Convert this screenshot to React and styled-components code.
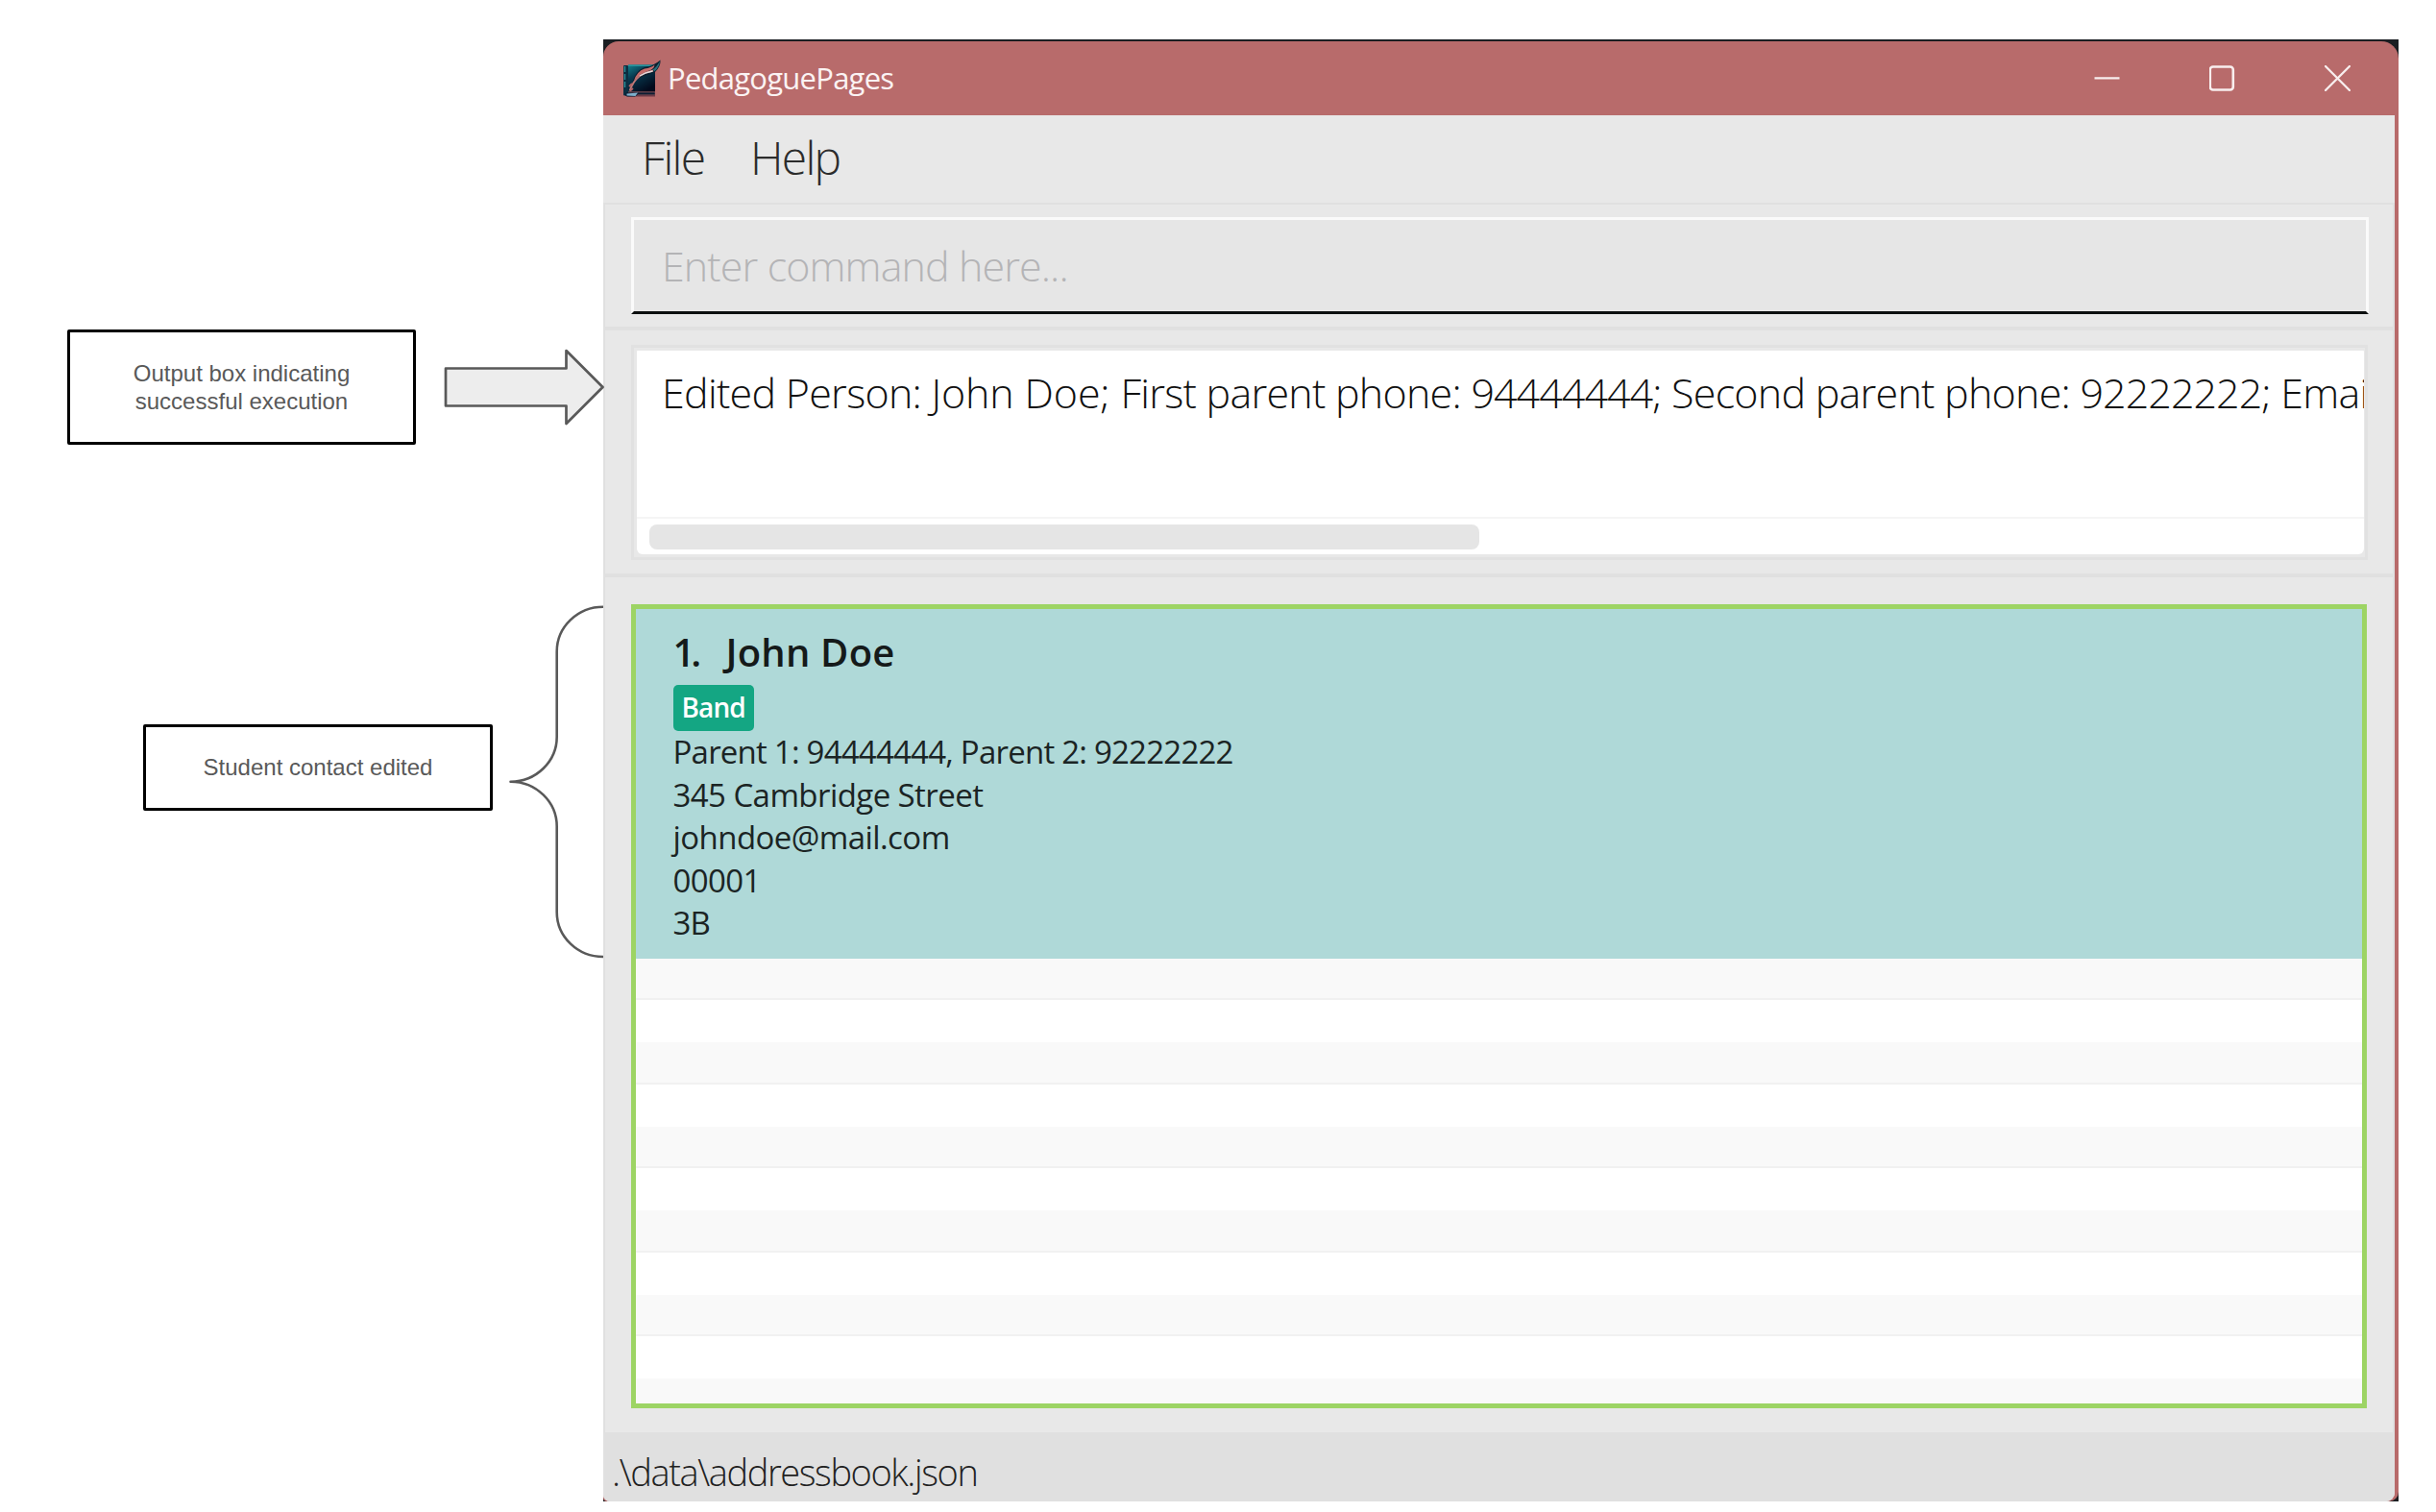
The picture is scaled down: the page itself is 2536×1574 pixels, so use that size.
import React from 'react';
import styled, { createGlobalStyle } from 'styled-components';

const GlobalStyle = createGlobalStyle`
  *, *::before, *::after { box-sizing: border-box; }
  body {
    margin: 0;
    background: #fff;
    overflow: hidden;
    font-family: 'Open Sans', 'Noto Sans', sans-serif;
  }
  svg { display: block; flex: none; }
`;

const Page = styled.main`
  display: flex;
  width: 2536px;
  height: 1574px;
  overflow: hidden;
`;

/* Annotations on the left */

const Annotations = styled.aside`
  flex: none;
  width: 628px;
  padding-top: 343px;
  z-index: 1;
`;

const Annotation = styled.div`
  display: flex;
  align-items: ${(p) => p.$align || 'center'};
  gap: ${(p) => p.$gap}px;
  margin-top: ${(p) => p.$top || 0}px;
  padding-left: ${(p) => p.$indent}px;
`;

const Callout = styled.p`
  display: flex;
  align-items: center;
  justify-content: center;
  flex: none;
  width: ${(p) => p.$width}px;
  height: ${(p) => p.$height}px;
  margin: ${(p) => p.$drop || 0}px 0 0;
  padding-bottom: ${(p) => p.$lift || 0}px;
  border: 3px solid #000;
  border-radius: 2px;
  background: #fff;
  color: #595959;
  font: 24px/29px 'Liberation Sans', Arial, sans-serif;
  text-align: center;
`;

/* Application window */

const Window = styled.section`
  display: flex;
  flex: none;
  width: 1868.5px;
  height: 1522px;
  margin-top: 41px;
  padding-top: 2px;
  background: #1b1e22;
`;

const Frame = styled.div`
  display: flex;
  flex-direction: column;
  flex: 1;
  padding-right: 3.5px;
  border-radius: 16px 18px 10px 4px;
  background: #b86b6b;
  overflow: hidden;
`;

const TitleBar = styled.header`
  display: flex;
  align-items: center;
  flex: none;
  height: 77px;
  padding: 0 46px 0 20px;
`;

const Title = styled.h1`
  flex: 1;
  margin: -1px 0 0 7px;
  color: #fbf3f3;
  font-size: 31px;
  font-weight: 400;
  letter-spacing: -0.75px;
`;

const WindowControls = styled.div`
  display: flex;
  gap: ${(p) => p.$gap}px;
  color: #f8eeee;
`;

const Content = styled.div`
  display: flex;
  flex-direction: column;
  flex: 1;
  border-radius: 0 0 9px 7px;
  background: #e8e8e8;
  overflow: hidden;
`;

const MenuBar = styled.nav`
  display: flex;
  gap: 47.5px;
  flex: none;
  height: 91px;
  padding-left: 40px;
`;

const MenuItem = styled.span`
  color: #2c2c2c;
  font-size: 48px;
  font-weight: 300;
  line-height: 87px;
  letter-spacing: -1.7px;
`;

const Pane = styled.div`
  display: flex;
  flex-direction: column;
  flex: none;
  height: ${(p) => p.$height}px;
  padding: ${(p) => p.$pad};
  border: 2px solid #e0e0e0;
  border-bottom-width: ${(p) => p.$bottom ?? 2}px;
`;

const CommandField = styled.div`
  flex: none;
  height: 101px;
  padding-left: 29px;
  border: 3px solid #fafafa;
  border-bottom-color: #0c0f0f;
  background: #e6e6e6;
  color: #b4b4b6;
  font-size: 43px;
  font-weight: 300;
  line-height: 95px;
  letter-spacing: -0.9px;
`;

const ResultBox = styled.div`
  display: flex;
  flex: 1;
  padding: 3px 1px 3px 3px;
  border: 3px solid #e1e1e1;
`;

const ResultArea = styled.div`
  display: flex;
  flex-direction: column;
  flex: 1;
  min-width: 0;
  border-radius: 1px 1px 6px 6px;
  background: #fff;
  overflow: hidden;
`;

const ResultText = styled.div`
  flex: none;
  height: 173px;
  padding: 14px 0 0 26px;
  color: #111;
  font-size: 43px;
  font-weight: 300;
  line-height: 60px;
  white-space: pre;
`;

const ResultPart = styled.span`
  letter-spacing: ${(p) => p.$tracking}px;
`;

const ScrollTrack = styled.div`
  flex: 1;
  padding: 6px 0 0 13px;
  border-top: 2px solid #f5f5f5;
`;

const ScrollThumb = styled.div`
  width: 864px;
  height: 26px;
  border-radius: 8px;
  background: #e5e5e5;
`;

const PersonList = styled.div`
  display: flex;
  flex-direction: column;
  flex: 1;
  border: 5px solid #9dd464;
  overflow: hidden;
`;

const PersonCard = styled.article`
  display: flex;
  flex-direction: column;
  align-items: flex-start;
  flex: none;
  height: 363.5px;
  padding: 17px 0 0 38.5px;
  background: #afd9d8;
  color: #1b2424;
`;

const PersonName = styled.h2`
  display: flex;
  margin: 0 0 6px;
  color: #151a1a;
  font-size: 40px;
  font-weight: 600;
  line-height: 56px;
  letter-spacing: 0.2px;
`;

const PersonIndex = styled.span`
  width: 55px;
  letter-spacing: -4px;
`;

const Tag = styled.span`
  height: 48px;
  padding: 0 9.5px 0 9px;
  border-radius: 5px;
  background: #14a683;
  color: #fff;
  font-size: 28px;
  font-weight: 600;
  line-height: 47px;
  letter-spacing: -0.9px;
`;

const PersonField = styled.span`
  font-size: 33px;
  line-height: 44.6px;
  letter-spacing: ${(p) => p.$tracking || 0}px;
`;

const EmptyRow = styled.div`
  flex: none;
  height: 43.75px;
  background: #fff;

  &:nth-child(even) {
    border-bottom: 2px solid #f1f1f1;
    background: #f9f9f9;
  }
`;

const StatusBar = styled.footer`
  flex: 1;
  padding: 9px 0 0 9px;
  background: #e0e0e0;
  color: #222;
  font-size: 38px;
  font-weight: 300;
  line-height: 64px;
  letter-spacing: -1.4px;
`;

function ArrowRight() {
  return (
    <svg width="167" height="80" viewBox="0 0 167 80" overflow="visible">
      <path
        d="M2 20.5H127.5V2L165.5 40L127.5 78V59.5H2Z"
        fill="#ededed"
        stroke="#595959"
        strokeWidth="2.7"
        strokeLinejoin="round"
      />
    </svg>
  );
}

function Brace() {
  return (
    <svg width="98" height="368" viewBox="0 0 98 368">
      <path
        d="M98 1.7A48.3 46.5 0 0 0 49.7 48.2V137A48.3 46.7 0 0 1 1.5 183.7A48.3 46.7 0 0 1 49.7 230.4V319.5A48.3 46.5 0 0 0 98 366"
        fill="none"
        stroke="#595959"
        strokeWidth="2.6"
        strokeLinejoin="round"
        strokeLinecap="round"
      />
    </svg>
  );
}

function BookIcon() {
  return (
    <svg width="40" height="40" viewBox="0 0 40 40">
      <defs>
        <linearGradient id="cover" x1="0" y1="0" x2="0.6" y2="1">
          <stop offset="0" stopColor="#12808c" />
          <stop offset="0.4" stopColor="#073a50" />
          <stop offset="1" stopColor="#020a1c" />
        </linearGradient>
      </defs>
      <path d="M6 36.5H34V38.5H4Z" fill="#6d3b47" />
      <rect x="1" y="6" width="5" height="31.5" rx="1" fill="#0b2f42" />
      <path d="M2.5 7V31" stroke="#2f8f98" strokeWidth="1.4" strokeDasharray="6 2" />
      <rect x="6" y="5.5" width="28" height="28" fill="url(#cover)" />
      <path d="M6 6.2H34" stroke="#2496a0" strokeWidth="1.4" />
      <path d="M3 37.5Q2.5 34.5 5 34.2H33.8V36.6H16L13 38.4H5Z" fill="#0c1d33" />
      <path d="M4.5 37.6V35.6L16 34.6L13.5 38Z" fill="#7fb0cc" />
      <path d="M10 25Q13 12 23 8Q32 7 39.5 0.5Q40 7 34 13Q28 16 21 17.5Q15 20 10 25Z" fill="#0a2030" />
      <path d="M12 22Q15 12.5 23 9.6Q30 8.6 33.5 5.5Q33 10 27 11.8Q18 14.5 12 22Z" fill="#c66c6b" />
      <path d="M31.5 10.5Q36 7.5 39 1.5Q38.5 8 33.5 12.3Z" fill="#2a6f7c" />
      <path d="M7.5 32.5Q11 22.5 18 17Q24 13 32 11.5" fill="none" stroke="#bd7877" strokeWidth="2" />
      <path d="M18 17Q24 13.2 31.5 12" fill="none" stroke="#e3dcdf" strokeWidth="1.3" />
      <path d="M7 28L10 25M8 32.5L11 30" stroke="#b56466" strokeWidth="1.8" />
    </svg>
  );
}

function MinimizeIcon() {
  return (
    <svg width="27" height="27" viewBox="0 0 27 27" stroke="currentColor" fill="none">
      <path d="M0.5 13.4H26.5" strokeWidth="2.2" />
    </svg>
  );
}

function MaximizeIcon() {
  return (
    <svg width="27" height="27" viewBox="0 0 27 27" stroke="currentColor" fill="none">
      <rect x="0.8" y="1.5" width="24" height="24" rx="3" strokeWidth="2.6" />
    </svg>
  );
}

function CloseIcon() {
  return (
    <svg width="27" height="27" viewBox="0 0 27 27" stroke="currentColor" fill="none">
      <path d="M1 1L26 26M26 1L1 26" strokeWidth="2.3" strokeLinecap="round" />
    </svg>
  );
}

const resultParts = [
  { text: 'Edited Person: ', tracking: -0.72 },
  { text: 'John Doe; ', tracking: -0.15 },
  { text: 'First parent phone: ', tracking: -0.75 },
  { text: '94444444', tracking: -0.95 },
  { text: '; Second parent phone: ', tracking: -0.75 },
  { text: '92222222', tracking: -0.95 },
  { text: '; Emai', tracking: -0.75 },
];

const personFields = [
  { text: 'Parent 1: 94444444, Parent 2: 92222222', tracking: -0.78 },
  { text: '345 Cambridge Street', tracking: -0.57 },
  { text: 'johndoe@mail.com', tracking: -0.57 },
  { text: '00001', tracking: -0.6 },
  { text: '3B', tracking: -0.8 },
];

export default function App() {
  return (
    <>
      <GlobalStyle />
      <Page>
        <Annotations>
          <Annotation $indent={70} $gap={29}>
            <Callout $width={363} $height={120}>
              Output box indicating
              <br />
              successful execution
            </Callout>
            <ArrowRight />
          </Annotation>
          <Annotation $indent={149} $gap={17} $top={167} $align="flex-start">
            <Callout $width={364} $height={90} $drop={124} $lift={2}>
              Student contact edited
            </Callout>
            <Brace />
          </Annotation>
        </Annotations>

        <Window>
          <Frame>
            <TitleBar>
              <BookIcon />
              <Title>PedagoguePages</Title>
              <WindowControls $gap={93}>
                <MinimizeIcon />
                <MaximizeIcon />
                <CloseIcon />
              </WindowControls>
            </TitleBar>
            <Content>
              <MenuBar>
                <MenuItem>File</MenuItem>
                <MenuItem>Help</MenuItem>
              </MenuBar>
              <Pane $height={131} $pad="13px 25px 0 27px">
                <CommandField>Enter command here...</CommandField>
              </Pane>
              <Pane $height={257} $pad="15px 26px 14px 27px">
                <ResultBox>
                  <ResultArea>
                    <ResultText>
                      {resultParts.map((part) => (
                        <ResultPart key={part.text} $tracking={part.tracking}>
                          {part.text}
                        </ResultPart>
                      ))}
                    </ResultText>
                    <ScrollTrack>
                      <ScrollThumb />
                    </ScrollTrack>
                  </ResultArea>
                </ResultBox>
              </Pane>
              <Pane $height={892} $pad="28px 27px 25px 27px" $bottom={0}>
                <PersonList>
                  <PersonCard>
                    <PersonName>
                      <PersonIndex>1.</PersonIndex>
                      John Doe
                    </PersonName>
                    <Tag>Band</Tag>
                    {personFields.map((field) => (
                      <PersonField key={field.text} $tracking={field.tracking}>
                        {field.text}
                      </PersonField>
                    ))}
                  </PersonCard>
                  {Array.from({ length: 11 }, (_, i) => (
                    <EmptyRow key={i} />
                  ))}
                </PersonList>
              </Pane>
              <StatusBar>.\data\addressbook.json</StatusBar>
            </Content>
          </Frame>
        </Window>
      </Page>
    </>
  );
}
